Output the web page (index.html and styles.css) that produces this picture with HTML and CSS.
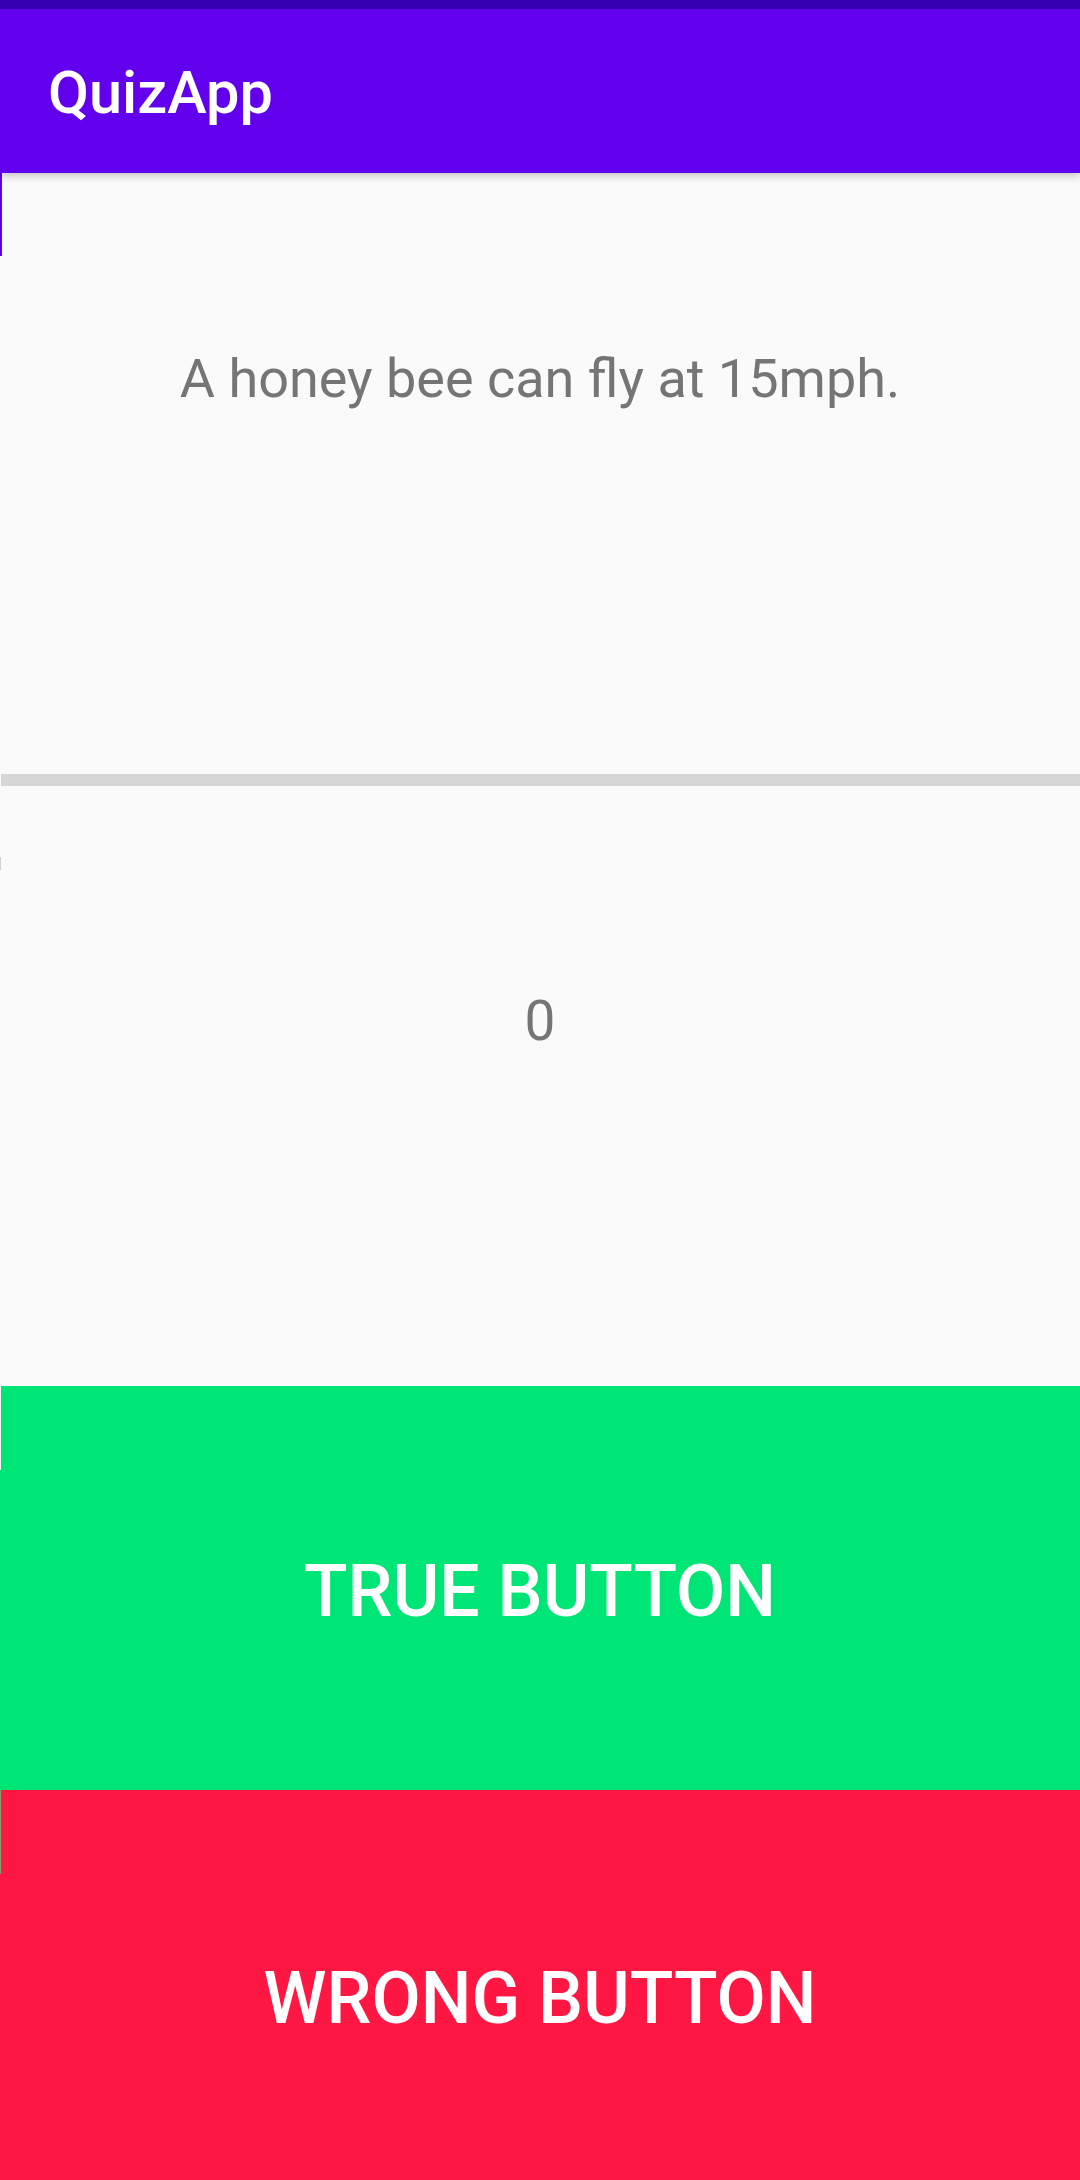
FILE: index.html
```html
<!DOCTYPE html>
<html lang="en">
<head>
<meta charset="utf-8">
<title>QuizApp</title>
<link rel="stylesheet" href="styles.css">
</head>
<body>
<div class="screen">
  <div class="status-bar"></div>
  <header class="app-bar">
    <h1 class="app-title">QuizApp</h1>
  </header>
  <main class="content">
    <section class="question">
      <p class="question-text">A honey bee can fly at 15mph.</p>
    </section>
    <div class="divider"></div>
    <section class="score">
      <p class="score-text">0</p>
    </section>
    <button class="answer answer-true">TRUE BUTTON</button>
    <button class="answer answer-wrong">WRONG BUTTON</button>
  </main>
</div>
</body>
</html>
```
FILE: styles.css
```css
* { box-sizing: border-box; }
html, body {
  margin: 0;
  padding: 0;
  background: #fafafa;
}
body {
  width: 1080px;
  height: 2180px;
  overflow: hidden;
  font-family: Roboto, "Noto Sans", "Liberation Sans", sans-serif;
}
.screen {
  display: flex;
  flex-direction: column;
  width: 1080px;
  height: 2180px;
  overflow: hidden;
}
.status-bar {
  height: 9px;
  background: #3700b3;
  flex: none;
}
.app-bar {
  position: relative;
  z-index: 2;
  flex: none;
  height: 164px;
  background: #6200ee;
  display: flex;
  align-items: center;
  padding-left: 48px;
  box-shadow: 0 3px 8px rgba(0, 0, 0, 0.22);
}
.app-title {
  margin: 0;
  color: #ffffff;
  font-weight: 500;
  font-size: 59.5px;
  line-height: 64px;
  padding-top: 3px;
}
.content {
  display: flex;
  flex-direction: column;
  flex: 1;
  min-height: 0;
}
.question {
  position: relative;
  height: 601px;
  flex: none;
  padding-top: 174px;
  text-align: center;
}
.question::before {
  content: "";
  position: absolute;
  left: 0;
  top: 0;
  width: 2px;
  height: 83px;
  background: #6200ee;
}
.question-text, .score-text {
  margin: 0;
  font-size: 54px;
  line-height: 64px;
  color: #757575;
  font-weight: 400;
}
.score-text { font-size: 55px; }
.divider {
  flex: none;
  height: 12px;
  margin-left: 1px;
  background: #d6d6d6;
}
.score {
  position: relative;
  flex: none;
  height: 600px;
  padding-top: 203px;
  text-align: center;
}
.score::before {
  content: "";
  position: absolute;
  left: 0;
  top: 71px;
  width: 1px;
  height: 13px;
  background: #cfcfcf;
}
.answer {
  position: relative;
  flex: none;
  display: flex;
  align-items: center;
  justify-content: center;
  width: 100%;
  border: 0;
  margin: 0;
  padding: 6px 0 0 0;
  font-family: Roboto, "Noto Sans", "Liberation Sans", sans-serif;
  font-weight: 500;
  font-size: 71.5px;
  color: #ffffff;
  letter-spacing: 0;
}
.answer::before {
  content: "";
  position: absolute;
  left: 0;
  top: 0;
  width: 1px;
  height: 84px;
}
.answer-true {
  height: 404px;
  background: #00e676;
}
.answer-true::before { background: #f4f4f4; }
.answer-wrong {
  height: 410px;
  background: #ff1744;
}
.answer-wrong::before { background: #8a9a6a; }
```
